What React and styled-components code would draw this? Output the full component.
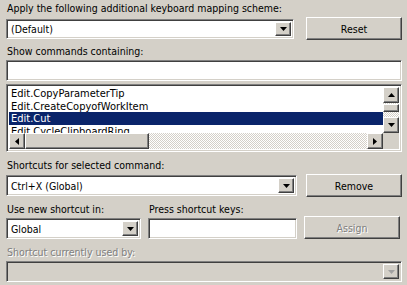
import React from 'react';
import styled, { createGlobalStyle, css } from 'styled-components';

const Global = createGlobalStyle`
  html, body { margin: 0; padding: 0; background: #d4d0c8; }
  body {
    width: 407px; height: 285px; overflow: hidden;
    font-family: "DejaVu Sans Condensed", "DejaVu Sans", Tahoma, sans-serif;
    font-stretch: semi-condensed;
    font-size: 10.5px; color: #000;
  }
  * { box-sizing: border-box; }
`;

const sunken = css`
  border: 1px solid;
  border-color: #808080 #fff #fff #808080;
  box-shadow: inset 1px 1px 0 #404040, inset -1px -1px 0 #d4d0c8;
`;

const raised = css`
  border: 1px solid;
  border-color: #fff #404040 #404040 #fff;
  box-shadow: inset -1px -1px 0 #808080, inset 1px 1px 0 #d4d0c8;
`;

const Dialog = styled.div`
  width: 407px; height: 285px;
  padding: 2px 5px 0 6px;
  display: flex; flex-direction: column;
`;

const Label = styled.div`
  height: 13px; line-height: 13px;
  margin-top: ${p => p.$mt || 0}px;
  margin-bottom: ${p => (p.$mb ?? 2)}px;
  padding-left: 1px;
  white-space: nowrap;
  color: ${p => (p.$disabled ? '#808080' : '#000')};
  text-shadow: ${p => (p.$disabled ? '1px 1px 0 #fff' : 'none')};
`;

const Row = styled.div`
  display: grid;
  grid-template-columns: ${p => p.$cols};
  column-gap: ${p => p.$gap ?? 9}px;
  align-items: ${p => p.$align || 'end'};
  margin-top: ${p => p.$mt || 0}px;
`;

const Field = styled.div`
  display: flex; flex-direction: column;
`;

const Combo = styled.div`
  ${sunken};
  height: ${p => p.$h || 21}px;
  background: ${p => (p.$disabled ? '#d4d0c8' : '#fff')};
  display: flex; align-items: stretch;
  padding: 2px;
`;

const ComboText = styled.span`
  flex: 1; padding-left: 2px;
  display: flex; align-items: center;
  white-space: nowrap; overflow: hidden;
`;

const DropBtn = styled.div`
  ${raised};
  width: 16px; background: #d4d0c8;
  display: flex; align-items: center; justify-content: center;
`;

const TextBox = styled.div`
  ${sunken};
  height: ${p => p.$h || 21}px;
  background: #fff;
`;

const Button = styled.button`
  ${raised};
  height: ${p => p.$h || 23}px;
  background: #d4d0c8;
  font: inherit;
  padding: 0;
  color: ${p => (p.disabled ? '#808080' : '#000')};
  text-shadow: ${p => (p.disabled ? '1px 1px 0 #fff' : 'none')};
`;

const ListBox = styled.div`
  ${sunken};
  height: 68px;
  margin-top: 3px;
  padding: 2px;
  background: #fff;
  display: grid;
  grid-template-columns: 1fr 16px;
  grid-template-rows: 1fr 16px;
`;

const Items = styled.div`
  overflow: hidden;
  font-size: 11px;
`;

const Item = styled.div`
  height: 12.5px; line-height: 13px;
  padding-left: 2px;
  white-space: nowrap;
  background: ${p => (p.$selected ? '#0a246a' : 'transparent')};
  color: ${p => (p.$selected ? '#fff' : '#000')};
`;

const checker = css`
  background: repeating-conic-gradient(#fff 0 25%, #d4d0c8 0 50%) 0 0 / 2px 2px;
`;

const VScroll = styled.div`
  display: flex; flex-direction: column;
  ${checker};
`;

const HScroll = styled.div`
  display: flex;
  ${checker};
`;

const ScrollBtn = styled.div`
  ${raised};
  width: 16px; height: 16px; flex: none;
  background: #d4d0c8;
  display: flex; align-items: center; justify-content: center;
`;

const Thumb = styled.div`
  ${raised};
  background: #d4d0c8;
  flex: none;
  width: ${p => p.$w || 16}px;
  height: ${p => p.$h || 16}px;
  margin-top: ${p => p.$mt || 0}px;
`;

const Spacer = styled.div`flex: 1;`;

const Corner = styled.div`background: #d4d0c8;`;

const Arrow = ({ dir = 'down', color = '#000' }) => {
  const pts = {
    down: '0,0 7,0 3.5,4',
    up: '0,4 7,4 3.5,0',
    left: '4,0 4,7 0,3.5',
    right: '0,0 0,7 4,3.5',
  }[dir];
  const horiz = dir === 'left' || dir === 'right';
  return (
    <svg width={horiz ? 4 : 7} height={horiz ? 7 : 4} viewBox={horiz ? '0 0 4 7' : '0 0 7 4'}>
      <polygon points={pts} fill={color} />
    </svg>
  );
};

export default function App() {
  return (
    <>
      <Global />
      <Dialog>
        <Label>Apply the following additional keyboard mapping scheme:</Label>
        <Row $cols="288px 96px" $gap={12} $align="center">
          <Combo $h={20}>
            <ComboText>(Default)</ComboText>
            <DropBtn><Arrow /></DropBtn>
          </Combo>
          <Button>Reset</Button>
        </Row>

        <Label $mt={5}>Show commands containing:</Label>
        <TextBox />

        <ListBox>
          <Items>
            <Item>Edit.CopyParameterTip</Item>
            <Item>Edit.CreateCopyofWorkItem</Item>
            <Item $selected>Edit.Cut</Item>
            <Item>Edit.CycleClipboardRing</Item>
          </Items>
          <VScroll>
            <ScrollBtn><Arrow dir="up" /></ScrollBtn>
            <Thumb $h={8} $mt={1} />
            <Spacer />
            <ScrollBtn><Arrow dir="down" /></ScrollBtn>
          </VScroll>
          <HScroll>
            <ScrollBtn><Arrow dir="left" /></ScrollBtn>
            <Thumb $w={124} />
            <Spacer />
            <ScrollBtn><Arrow dir="right" /></ScrollBtn>
          </HScroll>
          <Corner />
        </ListBox>

        <Label $mt={7}>Shortcuts for selected command:</Label>
        <Row $cols="291px 96px" $gap={9} $align="center">
          <Combo>
            <ComboText>Ctrl+X (Global)</ComboText>
            <DropBtn><Arrow /></DropBtn>
          </Combo>
          <Button>Remove</Button>
        </Row>

        <Row $cols="135px 149px 96px" $gap={7} $mt={6}>
          <Field>
            <Label>Use new shortcut in:</Label>
            <Combo>
              <ComboText>Global</ComboText>
              <DropBtn><Arrow /></DropBtn>
            </Combo>
          </Field>
          <Field>
            <Label>Press shortcut keys:</Label>
            <TextBox />
          </Field>
          <Button disabled>Assign</Button>
        </Row>

        <Label $disabled $mt={7}>Shortcut currently used by:</Label>
        <Combo $disabled>
          <ComboText />
          <DropBtn><Arrow color="#a0a0a0" /></DropBtn>
        </Combo>
      </Dialog>
    </>
  );
}
